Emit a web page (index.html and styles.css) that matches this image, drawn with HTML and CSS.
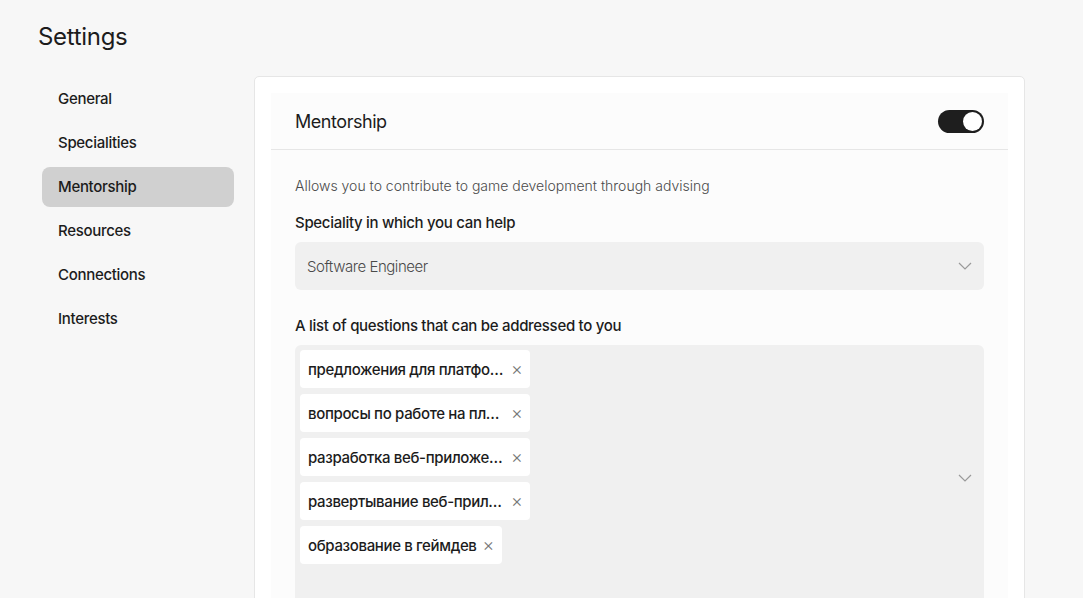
FILE: index.html
```html
<!DOCTYPE html>
<html lang="en">
<head>
<meta charset="utf-8" />
<title>Settings</title>
<link rel="stylesheet" href="styles.css">
</head>
<body>
	<h1 class="page-title">Settings</h1>

	<div class="layout">
		<!-- left menu -->
		<nav class="side-nav">
			<a class="nav-item" href="#">General</a>
			<a class="nav-item" href="#">Specialities</a>
			<a class="nav-item active" href="#">Mentorship</a>
			<a class="nav-item" href="#">Resources</a>
			<a class="nav-item" href="#">Connections</a>
			<a class="nav-item" href="#">Interests</a>
		</nav>

		<!-- mentorship section -->
		<section class="card">
			<div class="panel">
				<div class="panel-head">
					<h2 class="panel-title">Mentorship</h2>
					<span class="toggle on"><span class="knob"></span></span>
				</div>

				<div class="panel-body">
					<p class="hint">Allows you to contribute to game development through advising</p>

					<label class="field-label">Speciality in which you can help</label>
					<div class="select">
						<span class="select-value">Software Engineer</span>
						<svg class="chevron" width="14" height="8" viewBox="0 0 14 8"><path d="M1 1l6 6 6-6" fill="none" stroke="#9a9a9a" stroke-width="1.2"/></svg>
					</div>

					<label class="field-label">A list of questions that can be addressed to you</label>
					<div class="select multi">
						<div class="chips">
							<span class="chip"><span class="chip-text">предложения для платформы</span><span class="chip-x">×</span></span>
							<span class="chip"><span class="chip-text">вопросы по работе на платформе</span><span class="chip-x">×</span></span>
							<span class="chip"><span class="chip-text">разработка веб-приложений</span><span class="chip-x">×</span></span>
							<span class="chip"><span class="chip-text">развертывание веб-приложений</span><span class="chip-x">×</span></span>
							<span class="chip"><span class="chip-text">образование в геймдев</span><span class="chip-x">×</span></span>
						</div>
						<svg class="chevron" width="14" height="8" viewBox="0 0 14 8"><path d="M1 1l6 6 6-6" fill="none" stroke="#9a9a9a" stroke-width="1.2"/></svg>
					</div>
				</div>
			</div>
		</section>
	</div>
</body>
</html>
```

FILE: styles.css
```css
html, body { height: 100%; }

body {
	background: #f7f7f7;
	color: #1c1c1c;
	margin: 0;
	padding: 0;
	font-family: Inter, "Noto Sans", sans-serif;
	overflow: hidden;
}

.page-title {
	margin: 0;
	padding: 22px 0 0 38px;
	font-size: 24px;
	font-weight: 400;
	line-height: 30px;
	letter-spacing: -0.3px;
}

.layout {
	display: flex;
	align-items: flex-start;
	gap: 20px;
	padding: 24px 0 0 42px;
}

/* left menu */
.side-nav {
	display: flex;
	flex-direction: column;
	gap: 4px;
	width: 192px;
	margin-top: 3px;
}

.nav-item {
	display: block;
	height: 40px;
	line-height: 40px;
	padding: 0 16px;
	border-radius: 8px;
	color: #1c1c1c;
	text-decoration: none;
	font-size: 15px;
	font-weight: 500;
	letter-spacing: -0.3px;
}

.nav-item.active {
	background: #d0d0d0;
}

/* card */
.card {
	width: 737px;
	min-height: 560px;
	padding: 16px;
	background: #fff;
	border: 1px solid #e6e6e6;
	border-radius: 5px;
}

.panel {
	background: #fcfcfc;
	min-height: 560px;
}

.panel-head {
	display: flex;
	align-items: center;
	justify-content: space-between;
	height: 56px;
	padding: 0 24px;
	border-bottom: 1px solid #e6e6e6;
}

.panel-title {
	margin: 0;
	font-size: 18px;
	font-weight: 400;
	letter-spacing: -0.45px;
}

.toggle {
	position: relative;
	width: 46px;
	height: 23px;
	border-radius: 12px;
	background: #ccc;
}

.toggle.on {
	background: #1e1e1e;
}

.toggle .knob {
	position: absolute;
	top: 2px;
	left: 2px;
	width: 19px;
	height: 19px;
	border-radius: 50%;
	background: #fff;
}

.toggle.on .knob {
	left: 25px;
}

.panel-body {
	padding: 26px 24px 0;
}

.hint {
	margin: 0 0 17px;
	font-size: 14px;
	font-weight: 300;
	line-height: 20px;
	color: #4a4a4a;
}

.field-label {
	display: block;
	font-size: 15px;
	font-weight: 500;
	line-height: 20px;
	letter-spacing: -0.3px;
	margin-bottom: 9px;
}

.select {
	display: flex;
	align-items: center;
	justify-content: space-between;
	height: 48px;
	padding: 0 12px;
	margin-bottom: 26px;
	background: #f0f0f0;
	border-radius: 6px;
}

.select-value {
	font-size: 15px;
	font-weight: 300;
	letter-spacing: -0.45px;
	color: #4a4a4a;
}

.select.multi {
	height: 256px;
	padding: 5px 12px 5px 5px;
}

.chips {
	display: flex;
	flex-direction: column;
	align-items: flex-start;
	gap: 6px;
	align-self: flex-start;
}

.chip {
	display: flex;
	align-items: center;
	gap: 6px;
	height: 38px;
	padding: 0 8px;
	background: #fff;
	border-radius: 4px;
	font-size: 15px;
	font-weight: 500;
	letter-spacing: -0.35px;
}

.chip-text {
	max-width: 197px;
	white-space: nowrap;
	overflow: hidden;
	text-overflow: ellipsis;
}

.chip-x {
	color: #777;
	font-size: 18px;
	font-weight: 300;
	line-height: 1;
}
```
